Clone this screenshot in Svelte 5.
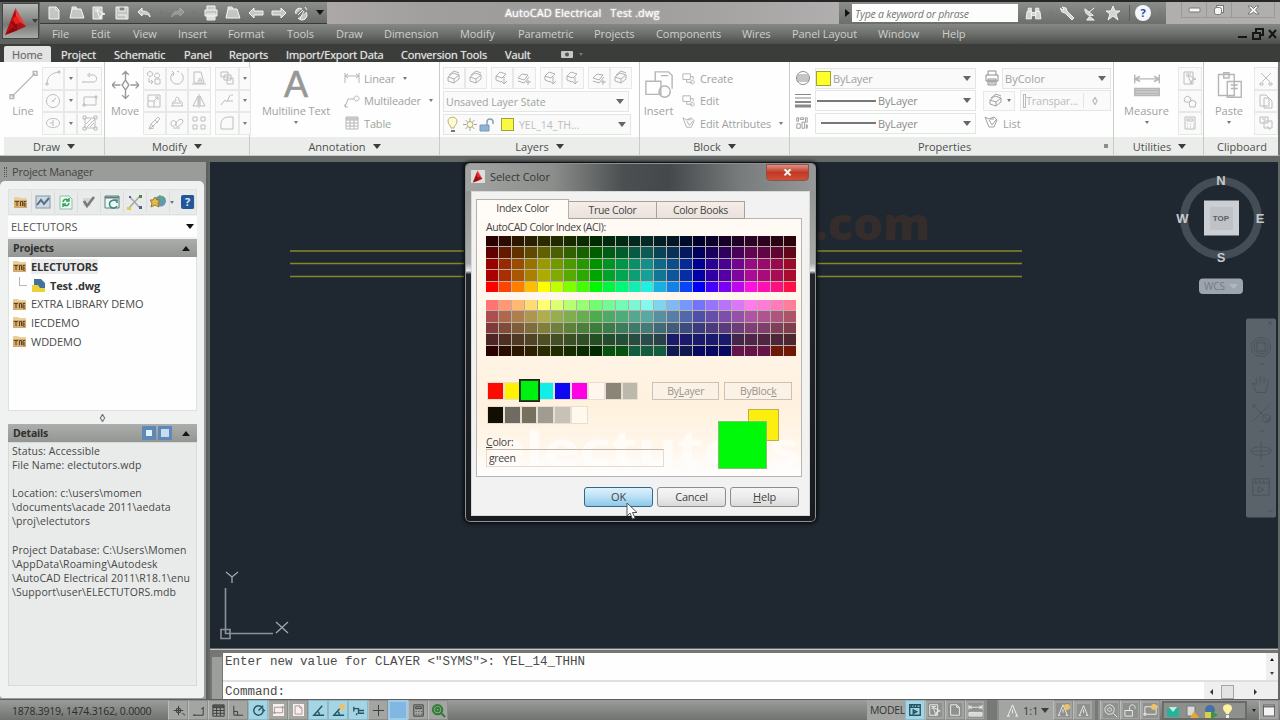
<script lang="ts">
  const ICONS: Record<string, string> = {
    line: 'M2 14L14 2M1 13h2v2H1zM13 1h2v2h-2z',
    arc: 'M2 14C2 7 6 3 14 2M1 13h2v2H1zM13 1h2v2h-2z',
    circle: 'M8 1.5a6.5 6.5 0 1 0 .01 0M8 8l3-3M7.5 7.5h1v1h-1z',
    ellipse: 'M8 3.5c4 0 6.5 2 6.5 4.500s-2.500 4.500-6.500 4.500S1.500 10.500 1.500 8 4 3.500 8 3.500M8 5v6M5 8h3',
    polyline: 'M1 12h11c4-1 3-7-1-7H7M1 11v2M8 3L5.500 5 8 7',
    rect: 'M2 4h12v8H2zM1 11h2v2H1zM13 3h2v2h-2z',
    hatch: 'M3 3h10v10H3zM1 1h3v3H1zM12 1h3v3h-3zM1 12h3v3H1zM12 12h3v3h-3zM5 12l7-7M4 9l5-5M8 12l4-4',
    move: 'M8 0v5M6 2l2-2 2 2M8 16v-5M6 14l2 2 2-2M0 8h5M2 6L0 8l2 2M16 8h-5M14 6l2 2-2 2M6 8l2-3 2 3-2 3z',
    copy: 'M4 1.500a2.500 2.500 0 1 0 .01 0M11 3a2.500 2.500 0 1 0 .01 0M9 9h5v5H9zM3 8v4h4M5 10l2 2-2 2',
    rotate: 'M4 3a6.300 6.300 0 1 0 8 0M3 1l2 2-1 3M8 1l2 1',
    stretch: 'M3 2h7l3 11H3zM7 11l2-3 2 3zM1 14h14',
    scale: 'M2 2h12v12H2zM2 8h6v6M8 8l4-4M9 4h3v3',
    trim: 'M2 13h12M4 13c-2-5 2-5 3-5-2-5 4-5 3 0 3 0 4 2 3 5M4 10h8',
    mirror: 'M7 3v10H2zM9 3v10h5zM8 1v14',
    erase: 'M3 14l2-5 7-7 2 2-7 7zM5 9l3 3M9 5l3 3M3 14l5-1',
    explode: 'M2 9c0-5 5-4 5-1s-5 5-5 1M7 10c0-6 7-7 7-4s-7 8-7 4M4 13h7',
    array: 'M2 2h4v4H2zM10 2h4v4h-4zM2 10h4v4H2zM10 10h4v4h-4z',
    layers: 'M2 2h7v5H2zM5 5h7v5H5zM8 8h6v6H8z',
    break: 'M2 12l4-5 2 2 3-7M9 8h5M12 2h2',
    fillet: 'M2 14V9c0-4 3-7 8-7h4v12H2',
    dim: 'M1 3v10M15 3v10M1 6h14M4 4L1 6l3 2M12 4l3 2-3 2',
    leader: 'M1 14l3-8h6M1 11v3h3M12.500 3a2.500 2.500 0 1 0 .01 0',
    table: 'M2 2h12v12H2zM2 5h12M2 8h12M2 11h12M6 5v9M10 5v9M2 3h12M2 4h12',
    stack: 'M2 7l5-4 6 2-5 4zM2 7v4l6 2 5-4V5M8 9v4M3 5l5-4 5 2',
    stackDown: 'M2 6l4-4 6 2-4 4zM2 6v4l5 2M10 7v7M7 11l3 3 3-3',
    stackStar: 'M2 8l4-4 6 1-4 5zM2 11l6 2 5-6M10 12h5M12 10v5',
    insert: 'M1 6h8v7H1zM6 6V1h7l2 2v7M11 8.500a3 3 0 1 0 .01 0M9 3h4',
    block: 'M2 3h8v6H2zM6 9v3h6M10 6h3v3M12 10a2 2 0 1 0 .01 0',
    attr: 'M2 2l4 2 5-2 3 3-3 7H6L2 2M6 5l3 5 4-5M7 4h4',
    globe: 'M8 1.500a6.500 6.500 0 1 0 .01 0M2 7h12M2 9h12M2 11h12M3 5h10',
    pattern: 'M2 2h2v4H2zM6 2h4v2H6zM12 2h2v5h-2zM2 9h4v5H2zM8 7h3v7H8zM13 10h1v4h-1z',
    printer: 'M4 5V1h8v4M2 5h12v6H2zM4 9h8v6H4zM5 11h6M5 13h6',
    measure: 'M1 2v5M15 2v5M1 4.500h14M4 3L1 4.500 4 6M12 3l3 1.500L12 6M1 10h14v4H1zM1 11h14M1 12h14M1 13h14',
    select: 'M2 2h9v12H2zM6 5l8 4-4 1-1 4zM4 4h5M4 6h2',
    cluster: 'M5 3l4 2-1 4H3L2 6zM10 7l4 2-1 5H8l-1-4z',
    calc: 'M3 2h10v12H3zM5 4h6v2H5zM5 9h1M8 9h1M11 9h1M5 12h1M8 12h1M11 12h1',
    paste: 'M2 2h9v12H2zM5 1h3v3H5zM7 6h8v9H7zM9 8h4M9 10h4',
    cut: 'M3 3l9 9M13 3l-9 9M2 13h3v2H2zM11 13h3v2h-3z',
    pages: 'M2 2h6l3 3v8H2zM6 5h5l3 3v7H6z',
    match: 'M2 2h8v6H2zM6 6h8v7H6zM9 11l3 4M4 4h4',
    new: 'M3 2h7l3 3v9H3zM10 2v3h3',
    open: 'M1 13L3 4h9l3 9zM3 4V2h4l1 2',
    save: 'M2 2h12v12H2zM5 2v4h6V2M4 10h8v4',
    undo: 'M2 7l4-4v3c5 0 8 2 8 6-2-3-4-3-8-3v2z',
    redo: 'M14 7l-4-4v3c-5 0-8 2-8 6 2-3 4-3 8-3v2z',
    left: 'M1 8l5-5v3h9v4H6v3z',
    right: 'M15 8l-5-5v3H1v4h9v3z',
    link: 'M3 9a4 4 0 0 1 6-5M13 7a5 5 0 0 1-8 6M5 10l5-5M7 14l4-8M12 2l2 3',
    find: 'M2 6h4v7H1zM10 6h4l1 7h-5zM3 3h3v3H3zM10 3h3v3h-3zM6 7h4v3H6z',
    wrench: 'M2 2l4 1 1 3 7 7-2 2-7-7-3-1-2-4 3 2 1-1z',
    dish: 'M2 3c0 6 4 8 9 7zM6 7l6-5M7 11l-3 4h8z',
    star: 'M8 1l2 5h5l-4 3 2 6-5-4-5 4 2-6-4-3h5z',
    angle: 'M14 13H3L12 3M7 9c2 1 2 2 2 4',
    plus: 'M8 2v12M2 8h12',
    corner: 'M3 3v10h10M3 9h4v4',
    elbow: 'M2 13h11V4M4 13v-1M13 6h-2',
    cross: 'M8 3v10M3 8h10M6 6h4v4H6zM12 11l3 2',
    otrack: 'M3 6h5v5h6M3 4v5M8 8h6M6 13v-2',
    target: 'M8 3a5 5 0 1 0 .01 0M8 8l5-5M12 8h3',
    annot: 'M8 2L3 14M8 2l5 12M2 14h3M11 14h3M8 7v4',
    lock: 'M2 8h8v6H2zM7 8V5c0-4 6-4 6 0v1',
    lens: 'M7 2a5 5 0 1 0 .01 0M11 11l4 4M7 5a2 2 0 1 0 .01 0',
    wheel: 'M8 1a7 7 0 1 0 .01 0M5 5h6v6H5zM8 3a5 5 0 1 0 .01 0',
    hand: 'M4 8V3M7 7V1M10 7V2M13 8V4M4 8l-3-1 3 7h7l2-6',
    zoom: 'M2 2l12 12M14 2L2 14M2 5V2h3M14 11v3h-3M12 9a3 3 0 1 0 .01 0',
    orbit: 'M8 1v14M1 8h14M8 5c10 0 10 6 0 6S-2 5 8 5',
    film: 'M2 2h12v12H2zM2 5h12M4 2v3M7 2v3M10 2v3M6 8l4 2-4 2z',
  };

  const QUICK = ['new', 'open', 'select', 'save', 'undo', '', 'redo', '', 'printer', 'open', 'left', 'right', 'link'];
  const MENUS = ['File', 'Edit', 'View', 'Insert', 'Format', 'Tools', 'Draw', 'Dimension', 'Modify', 'Parametric',
    'Projects', 'Components', 'Wires', 'Panel Layout', 'Window', 'Help'];
  const TABS = ['Home', 'Project', 'Schematic', 'Panel', 'Reports', 'Import/Export Data', 'Conversion Tools', 'Vault'];

  const DRAW = ['arc', '.', 'polyline', 'circle', '.', 'rect', 'ellipse', '.', 'hatch'];
  const MODIFY = ['copy', 'rotate', 'stretch', 'scale', 'trim', 'mirror', 'erase', 'explode', 'array'];
  const MODIFY_MORE = ['layers', '.', 'break', '.', 'fillet', '.'];
  const LAYER_TOOLS = ['stack', 'stack', 'stackDown', 'stackStar', 'stackDown', 'stackDown', 'stackStar', 'stack'];

  const PROJECTS = ['EXTRA LIBRARY DEMO', 'IECDEMO', 'WDDEMO'];

  // Color Index palette: one hue per column, dark to bright, then the pastel half mirrored
  const HUES = ['ff0000', 'ff4400', 'ff8000', 'ffbf00', 'ffff00', 'bfff00', '80ff00', '40ff00', '00f800', '00f540',
    '00f878', '12eeb0', '20f0e4', '18b0e0', '1480ea', '0844f8', '0000f8', '4400f8', '7c00f8', 'bc08ee', 'ff10e0',
    'ff10b4', 'ff1080', 'ff1048'];
  const DARK_ROWS = [0.17, 0.38, 0.6, 0.67, 1];
  const PASTEL_ROWS = [1, 0.68, 0.5, 0.31, 0.18];

  function shade(hex: string, value: number, pastel: boolean) {
    const rgb = [0, 2, 4].map((i) => parseInt(hex.slice(i, i + 2), 16));
    return 'rgb(' + rgb.map((c) => Math.round((pastel ? 115 + c * 0.55 : c) * value)).join(',') + ')';
  }

  function pastelCell(col: number, row: number) {
    if (row === 4) {
      if (col === 9 || col === 10) return '#08520f';
      if (col > 10 && col < 14) return '#145c40';
      if (col === 14 || col === 15) return '#101850';
      if (col > 15 && col < 19) return '#080860';
      if (col > 18 && col < 22) return '#641448';
      if (col > 21) return '#701808';
      return shade(HUES[col], 0.17, false);
    }
    if (row === 3 && col > 13 && col < 19) return '#19196e';
    return shade(HUES[col], PASTEL_ROWS[row], true);
  }

  const BASIC = ['#ff0a00', '#fff200', '#00f010', '#10eee8', '#1008f0', '#ff00e4', '#fff7ee', '#8b8578', '#bdb8ac'];
  const GRAYS = ['#120e02', '#6f6b60', '#77705f', '#a19c90', '#c8c1b4', '#fff8ed'];

  const DETAILS = `Status: Accessible
File Name: electutors.wdp

Location: c:\\users\\momen
\\documents\\acade 2011\\aedata
\\proj\\electutors

Project Database: C:\\Users\\Momen
\\AppData\\Roaming\\Autodesk
\\AutoCAD Electrical 2011\\R18.1\\enu
\\Support\\user\\ELECTUTORS.mdb`;

  const STATUS = [
    { icon: 'cross' }, { icon: 'elbow' }, { icon: 'table' }, { icon: 'corner' }, { icon: 'target', on: true },
    { icon: 'rect', paper: true }, { icon: 'new', paper: true }, { icon: 'angle', on: true }, { icon: 'angle', on: true, spark: true },
    { icon: 'otrack', on: true }, { icon: 'plus' }, { icon: '', blue: true }, { icon: 'calc' }, { icon: 'lens', green: true },
  ];
</script>

{#snippet icon(name: string, size = 16)}
  <svg class="ic" width={size} height={size} viewBox="0 0 16 16"><path d={ICONS[name]} /></svg>
{/snippet}

{#snippet tool(name: string)}
  <span class="tool">{#if name === '.'}<i class="caret tiny"></i>{:else}{@render icon(name)}{/if}</span>
{/snippet}

{#snippet folder()}
  <svg class="folder" width="15" height="14" viewBox="0 0 15 14">
    <path d="M1 2h5l1 1h7v10H1z" fill="#e9cf98" />
    <path d="M1 5h13v8H1z" fill="#d3ab6c" />
    <path d="M2 6.500h4M4 6.500V11M7.500 11V6.500h2V11M13 6.500h-2V11h2M11 9h2" fill="none" stroke="#5c4427" />
  </svg>
{/snippet}

{#snippet logo()}
  <svg class="logo" viewBox="0 0 24 30">
    <path d="M11 1L0 29l13-5z" fill="#b80d12" />
    <path d="M11 1l11 19-9 4z" fill="#ee3b38" />
    <path d="M6 16l7 8 9-4-7-5zM0 29l8-8 5 3z" fill="#7a0306" opacity=".65" />
    <path d="M8 12l4-3 4 7-5 2z" fill="#e8211f" />
  </svg>
{/snippet}

<div class="app">
  <header>
    <div class="appbtn">{@render logo()}<i class="caret"></i></div>
    <div class="title">
      <div class="quick">
        {#each QUICK as name}
          {#if name}<span class:dim={name === 'redo'}>{@render icon(name)}</span>{:else}<i class="caret tiny"></i>{/if}
        {/each}
        <i class="caret"></i>
      </div>
      <div class="caption">AutoCAD Electrical&nbsp;&nbsp; Test .dwg</div>
      <div class="search-zone">
        <i class="play"></i>
        <div class="search">Type a keyword or phrase</div>
        {@render icon('find', 17)}<i class="caret tiny"></i>
        {@render icon('wrench')}{@render icon('dish', 15)}{@render icon('star')}
        <b class="sep"></b><span class="help">?</span><i class="caret tiny"></i>
      </div>
      <div class="winbtns">
        <span><svg width="13" height="6"><rect x="1" y="1" width="11" height="4" rx="1" /></svg></span>
        <span><svg width="12" height="12"><rect x="3.500" y="1.500" width="7" height="7" /><rect x="1.500" y="3.500" width="7" height="7" rx="2" /></svg></span>
        <span class="wide"><svg width="13" height="12"><path d="M1 2h3l2.500 2.500L9 2h3L8.500 6l3.500 4H9L6.500 8 4 10H1l3.500-4z" /></svg></span>
      </div>
    </div>
    <nav class="menus">
      {#each MENUS as m}<span>{m}</span>{/each}
      <span class="mdi">
        <svg width="40" height="12" viewBox="0 0 40 12"><path d="M1 9h9" /><path d="M16 5h7v6h-7zM19 5V1h7v6h-3" stroke-width="1.400" /><path d="M32 2l7 8M39 2l-7 8" /></svg>
      </span>
    </nav>
  </header>

  <div class="tabs">
    {#each TABS as t, i}<span class:active={i === 0}>{t}</span>{/each}
    <span class="cam"><svg width="12" height="7"><rect width="12" height="7" rx="1" fill="#c6c8c5" /><circle cx="6" cy="3.500" r="2" fill="#555" /></svg><i class="caret tiny"></i></span>
  </div>

  <div class="ribbon">
    <section class="p-draw">
      <div class="content">
        <div class="big">{@render icon('line', 31)}<span>Line</span></div>
        <div class="tools g-draw">{#each DRAW as n}{@render tool(n)}{/each}</div>
      </div>
      <footer>Draw<i class="caret"></i></footer>
    </section>
    <section class="p-modify">
      <div class="content">
        <div class="big dark">{@render icon('move', 27)}<span>Move</span></div>
        <div class="tools g-mod">{#each MODIFY as n}{@render tool(n)}{/each}</div>
        <div class="tools g-more">{#each MODIFY_MORE as n}{@render tool(n)}{/each}</div>
      </div>
      <footer>Modify<i class="caret"></i></footer>
    </section>
    <section class="p-annot">
      <div class="content">
        <div class="big mtext"><b>A</b><span>Multiline Text</span><i class="caret tiny"></i></div>
        <div class="rows">
          <div>{@render icon('dim')}<span>Linear</span><i class="caret tiny"></i></div>
          <div>{@render icon('leader')}<span>Multileader</span><i class="caret tiny"></i></div>
          <div>{@render icon('table')}<span>Table</span></div>
        </div>
      </div>
      <footer>Annotation<i class="caret"></i></footer>
    </section>
    <section class="p-layers">
      <div class="content col">
        <div class="layer-tools">{#each LAYER_TOOLS as n}{@render tool(n)}{/each}</div>
        <div class="combo"><span>Unsaved Layer State</span><i class="caret"></i></div>
        <div class="combo low">
          <svg width="54" height="18" viewBox="0 0 54 18">
            <path d="M4 12c0-3-3-3-3-7 0-5 9-5 9 0 0 4-3 4-3 7z" fill="#fffcd0" stroke="#b8b27a" /><path d="M4 15h4" stroke="#777" stroke-width="2" />
            <circle cx="23" cy="8.500" r="3" fill="#fffbd0" stroke="#aaa78a" /><path d="M23 2v3M23 12v3M16 8.500h3M27 8.500h3M18.500 4l2 2M27.500 4l-2 2M18.500 13l2-2M27.500 13l-2-2" stroke="#aaa78a" />
            <path d="M33 9h9v6h-9z" fill="#8db4d8" stroke="#7898b8" /><path d="M40 9V6c0-4 6-4 6 0v2" fill="none" stroke="#8ba0b4" stroke-width="1.500" />
          </svg>
          <i class="swatch"></i><span class="faint">YEL_14_TH...</span><i class="caret"></i>
        </div>
      </div>
      <footer>Layers<i class="caret"></i></footer>
    </section>
    <section class="p-block">
      <div class="content">
        <div class="big">{@render icon('insert', 30)}<span>Insert</span></div>
        <div class="rows">
          <div>{@render icon('block', 15)}<span>Create</span></div>
          <div>{@render icon('block', 15)}<span>Edit</span></div>
          <div>{@render icon('attr', 15)}<span>Edit Attributes</span><i class="caret tiny"></i></div>
        </div>
      </div>
      <footer>Block<i class="caret"></i></footer>
    </section>
    <section class="p-props">
      <div class="content">
        <div class="props-main">
          <span class="dk">{@render icon('globe')}</span><div class="combo"><i class="swatch"></i><span>ByLayer</span><i class="caret"></i></div>
          <svg class="weights" width="16" height="15"><path d="M0 1.500h16M0 5h16" /><path d="M0 9h16" stroke-width="2" /><path d="M0 13h16" stroke-width="3" /></svg>
          <div class="combo mid"><hr /><span>ByLayer</span><i class="caret"></i></div>
          {@render icon('pattern', 14)}<div class="combo mid"><hr class="short" /><span>ByLayer</span><i class="caret"></i></div>
        </div>
        <div class="props-side">
          <div><span class="dk">{@render icon('printer')}</span><div class="combo"><span>ByColor</span><i class="caret"></i></div></div>
          <div class="transp"><span class="tool">{@render icon('stack')}<i class="caret tiny"></i></span><div class="combo"><i class="grip"></i><span class="faint">Transpar...</span><em>◊</em></div></div>
          <div>{@render icon('attr')}<span class="lst">List</span></div>
        </div>
      </div>
      <footer>Properties<i class="corner-mark"></i></footer>
    </section>
    <section class="p-util">
      <div class="content">
        <div class="big">{@render icon('measure', 28)}<span>Measure</span><i class="caret tiny"></i></div>
        <div class="tools one">{@render tool('select')}{@render tool('cluster')}{@render tool('calc')}</div>
      </div>
      <footer>Utilities<i class="caret"></i></footer>
    </section>
    <section class="p-clip">
      <div class="content">
        <div class="big">{@render icon('paste', 28)}<span>Paste</span><i class="caret tiny"></i></div>
        <div class="tools one">{@render tool('cut')}{@render tool('pages')}{@render tool('match')}</div>
      </div>
      <footer>Clipboard</footer>
    </section>
  </div>

  <main>
    <aside>
      <div class="pm-title"><i></i>Project Manager</div>
      <div class="pm-body">
        <div class="pm-tools">
          <span>{@render folder()}</span>
          <span><svg width="16" height="14"><rect x="1" y="1" width="14" height="12" fill="#cfd9e2" stroke="#8698a8" /><path d="M2 10l4-5 3 4 5-6" fill="none" stroke="#566f86" stroke-width="2" /></svg></span>
          <span><svg width="14" height="15"><path d="M1 1h9l3 3v10H1z" fill="#eefaf2" stroke="#91bfa3" /><path d="M4 7c1-4 5-3 6-1M10 8c-1 4-5 3-6 1M10 3v3H7M4 12V9h3" fill="none" stroke="#35a565" stroke-width="1.500" /></svg></span>
          <span><svg width="14" height="14"><path d="M1 3h8v8H1z" fill="#d5d7d5" /><path d="M2 6l3 5 7-9" fill="none" stroke="#777b78" stroke-width="2.500" /></svg></span>
          <span><svg width="16" height="15"><path d="M1 1h14v12H1z" fill="#eff6f6" stroke="#607d80" /><path d="M1 2.500h14" stroke="#607d80" stroke-width="2" /><path d="M12 6a4 4 0 1 0 1 5M9 5h4v3" fill="none" stroke="#2f8b76" stroke-width="1.500" /></svg></span>
          <span><svg width="16" height="16"><path d="M2 14L13 2M3 3l10 11" stroke="#a5a9a6" stroke-width="1.500" /><path d="M12 1h3v3h-3z" fill="#3c9045" /><path d="M0 13h4v3H0z" fill="#d6d04a" /><path d="M12 12h3v3h-3zM2 2h2v2H2z" fill="#55618a" /></svg></span>
          <span><svg width="17" height="16"><circle cx="10.500" cy="7" r="5.500" fill="#6297b8" /><path d="M9 2c4 1 1 4 5 5" fill="none" stroke="#5ab168" stroke-width="2" /><path d="M5 3l2 3h3l-2 3 1 4-4-2-4 2 1-4-2-3h3z" fill="#e2bc43" stroke="#98792a" /></svg></span>
          <i class="caret tiny"></i>
          <span class="blue-help">?</span>
        </div>
        <div class="pm-combo">ELECTUTORS<i class="caret"></i></div>
        <div class="pm-head">Projects<i class="caret up"></i></div>
        <div class="tree">
          <div>{@render folder()}<b class="hl">ELECTUTORS</b></div>
          <div class="child"><i class="elbow"></i><svg width="15" height="15"><path d="M3 1h7l4 4v9H3z" fill="#43719a" /><path d="M1 7h6l2 3h5v4H1z" fill="#ecd136" /></svg><b>Test .dwg</b></div>
          {#each PROJECTS as p}<div>{@render folder()}<span>{p}</span></div>{/each}
        </div>
        <div class="split">◊</div>
        <div class="pm-head"><span>Details</span><i class="dbtn"></i><i class="dbtn search-btn"></i><i class="caret up"></i></div>
        <pre class="details">{DETAILS}</pre>
      </div>
    </aside>

    <div class="work">
      <div class="canvas">
        <svg class="drawing" width="1068" height="486" viewBox="210 162 1068 486">
          <text class="mark" x="814" y="240" textLength="116" lengthAdjust="spacingAndGlyphs">.com</text>
          <path d="M290 251H1022M290 263.500H1022M290 276.500H1022" stroke="#858826" stroke-width="1.600" />
          <path d="M225.500 588V633.500H273M221 629.500h9v9h-9z" stroke="#8b9199" stroke-width="1.600" fill="none" />
          <path d="M226 572l6 5 6-5M232 577v6M276 622l12 11M288 622l-12 11" stroke="#a2a7ad" stroke-width="1.300" fill="none" />
          <circle cx="1221" cy="218" r="37" stroke="#444d56" stroke-width="8" fill="none" />
          <rect x="1204" y="200.500" width="35" height="35" fill="#cbced2" />
          <rect x="1210" y="207" width="23" height="23" fill="#bfc2c6" />
          <g class="compass">
            <text x="1221" y="185">N</text><text x="1221" y="262">S</text><text x="1182.500" y="223">W</text><text x="1260" y="223">E</text>
            <text class="top" x="1221" y="221">TOP</text>
          </g>
          <rect x="1199" y="278.500" width="44" height="15.500" rx="4" fill="#9da4ae" />
          <text class="wcs" x="1204" y="290">WCS</text><path d="M1229 284h9l-4.500 5z" fill="#b2b7bf" />
          <rect x="1246" y="318.500" width="30" height="199" rx="2" fill="#5b636a" />
          <g class="nav">
            <svg x="1250" y="336" width="22" height="22" viewBox="0 0 16 16"><path d={ICONS.wheel} /></svg>
            <svg x="1251" y="374" width="21" height="21" viewBox="0 0 16 16"><path d={ICONS.hand} /></svg>
            <svg x="1250" y="402" width="22" height="22" viewBox="0 0 16 16"><path d={ICONS.zoom} /></svg>
            <svg x="1250" y="440" width="22" height="22" viewBox="0 0 16 16"><path d={ICONS.orbit} /></svg>
            <svg x="1250" y="476" width="22" height="22" viewBox="0 0 16 16"><path d={ICONS.film} /></svg>
            <path d="M1260 364h4M1260 431h4M1260 466h4M1268 321l4 4M1272 321l-4 4M1268 511h5" />
          </g>
        </svg>
      </div>
      <div class="command">
        <i class="handle"></i>
        <div class="cmd-rows">
          <div class="history"><span>Enter new value for CLAYER &lt;"SYMS"&gt;: YEL_14_THHN</span><div class="vscroll"><i class="caret up"></i><i class="caret"></i></div></div>
          <div class="prompt"><span>Command:</span><div class="hscroll"><i class="lt"></i><b></b><i class="gt"></i></div></div>
        </div>
      </div>
    </div>
  </main>

  <div class="status">
    <span class="coords">1878.3919, 1474.3162, 0.0000</span>
    {#each STATUS as s}
      <span class="sb" class:on={s.on} class:blue={s.blue} class:paper={s.paper} class:green={s.green}>
        {#if s.icon}{@render icon(s.icon, 15)}{/if}{#if s.spark}<i class="spark"></i>{/if}
      </span>
    {/each}
    <span class="model">MODEL</span>
    <span class="sb on">{@render icon('film', 14)}</span>
    <span class="sb lite">{@render icon('select', 14)}</span>
    <span class="sb lite">{@render icon('new', 14)}</span>
    <span class="sb lite">{@render icon('measure', 15)}</span>
    <i class="trench"></i>
    <span class="scale">{@render icon('annot', 15)}1:1<i class="caret"></i></span>
    <span class="sb lite">{@render icon('annot', 14)}<i class="spark"></i></span>
    <span class="sb lite">{@render icon('annot', 13)}</span>
    <i class="trench thin"></i>
    <span class="sb lite">{@render icon('lens', 15)}</span>
    <span class="sb lite">{@render icon('lock', 15)}</span>
    <span class="sb lite">{@render icon('rect', 15)}<i class="spark"></i></span>
    <span class="tray">
      <svg width="78" height="16">
        <path d="M1 3l6 4 6-4v10H1z" fill="#27b39b" /><path d="M3 3l4 5 4-5" fill="#b7f4df" />
        <path d="M21 2h8v10h-8z" fill="#d9dad8" stroke="#75777a" /><path d="M28 7l5 7h-9z" fill="#e8a637" />
        <circle cx="44" cy="6" r="5" fill="#466fa6" /><path d="M39 8h7v6h-7z" fill="#d8cf46" /><path d="M45 7l7 4-7 4z" fill="#3a9548" />
        <path d="M60 10c0-2-3-3-3-6 0-5 9-5 9 0 0 3-3 4-3 6z" fill="#fff2a0" /><path d="M61.500 11v3" stroke="#eee" stroke-width="3" />
      </svg>
    </span>
    <i class="caret tiny"></i>
    <span class="sb end"><svg width="12" height="13"><rect x=".5" y="1" width="11" height="11" fill="#f2f3f2" stroke="#666" /><path d="M1 2.500h10" stroke="#777" stroke-width="2" /></svg></span>
  </div>

  <div class="dialog">
    <div class="d-title">{@render logo()}<span>Select Color</span><b class="close">×</b></div>
    <div class="d-body">
      <div class="d-tabs"><span class="active">Index Color</span><span>True Color</span><span>Color Books</span></div>
      <div class="page">
        <div class="aci">AutoCAD Color Index (ACI):</div>
        <div class="palette">
          {#each DARK_ROWS as v}{#each HUES as h}<i style:background={shade(h, v, false)}></i>{/each}{/each}
        </div>
        <div class="palette">
          {#each PASTEL_ROWS as _, r}{#each HUES as _, c}<i style:background={pastelCell(c, r)}></i>{/each}{/each}
        </div>
        <div class="picks">
          <div class="basic">
            {#each BASIC as c, i}<i class:picked={i === 2} style:background={c}></i>{/each}
          </div>
          <span class="dis">By<u>L</u>ayer</span><span class="dis">ByBloc<u>k</u></span>
        </div>
        <div class="basic grays">{#each GRAYS as c}<i style:background={c}></i>{/each}</div>
        <div class="entry">
          <div class="field"><span><u>C</u>olor:</span><div class="input">green</div></div>
          <div class="preview"><i class="old"></i><i class="now"></i></div>
          <svg class="wm" width="316" height="60"><text x="3" y="46" textLength="310" lengthAdjust="spacingAndGlyphs">electutors</text></svg>
        </div>
      </div>
      <div class="d-btns"><span class="ok">OK</span><span>Cancel</span><span><u>H</u>elp</span></div>
    </div>
  </div>
  <svg class="cursor" width="12" height="18" viewBox="0 0 12 18"><path d="M1 1v13l3-3 2.500 6 2.500-1-2.500-5.500H11z" /></svg>
</div>

<style>
  :global(body) { margin: 0; background: #3b3d3b; }

  .app {
    position: relative;
    width: 1280px;
    height: 720px;
    overflow: hidden;
    display: flex;
    flex-direction: column;
    background: #646866;
    font: 11px 'Open Sans', 'Noto Sans', sans-serif;
    color: #444;
  }
  .app * { box-sizing: border-box; }
  svg { display: block; flex: none; }
  u { text-underline-offset: 1px; }

  .ic path { fill: none; stroke: currentColor; stroke-width: 1; vector-effect: non-scaling-stroke; }
  .caret {
    display: inline-block;
    flex: none;
    border: 4px solid transparent;
    border-top: 5px solid #3c3c3c;
    border-bottom: 0;
  }
  .caret.tiny { border-width: 3px 2.500px 0; border-top-color: #777; }
  .caret.up { border: 4px solid transparent; border-bottom: 5px solid #161616; border-top: 0; }

  /* title + menu */
  header {
    height: 44px;
    flex: none;
    display: grid;
    grid-template: 22px 20px / 40px 1fr;
    border-top: 2px solid #252725;
    background: #5f625f;
  }
  .appbtn {
    grid-row: 1 / 3;
    margin: 1px 1px 5px 2px;
    padding-left: 2px;
    display: flex;
    align-items: center;
    gap: 4px;
    background: linear-gradient(#b8bab8, #777977 60%, #a9aba9);
    border: 1px solid #444;
  }
  .appbtn .logo { width: 23px; height: 31px; }
  .appbtn .caret { border-width: 4px 3px 0; }
  .title { display: flex; height: 22px; }
  .quick {
    width: 287px;
    padding: 0 3px 0 6px;
    display: flex;
    align-items: center;
    justify-content: space-between;
    background: linear-gradient(#8d8f8d, #686b68);
    border-bottom: 1px solid #3a3a3a;
    color: #f2f3f2;
  }
  .quick .ic path { fill: #e4e6e4; stroke: #f4f5f4; fill-opacity: .7; }
  .quick .dim { opacity: .35; }
  .quick .caret:last-child { border-top-color: #151515; }
  .caption {
    width: 512px;
    background: linear-gradient(90deg, #aba8a7, #a19f9e 20%, #9d9b9a 50%, #a5a3a2 75%, #b0aeae);
    color: #fff;
    font-size: 11px;
    line-height: 22px;
    letter-spacing: .1px;
    padding-left: 178px;
    text-shadow: 0 0 2px #fff;
  }
  .search-zone {
    width: 327px;
    display: flex;
    align-items: center;
    gap: 7px;
    background: linear-gradient(#8b8d8b, #6b6e6b);
    color: #f0f1f0;
  }
  .search-zone > .ic path { fill: #e8e9e8; fill-opacity: .8; }
  .play { border: 4px solid transparent; border-left: 5px solid #111; border-right: 0; margin-left: 6px; }
  .search {
    width: 166px;
    height: 18px;
    margin-left: -5px;
    background: #fdfdfd;
    color: #777;
    font-size: 10.500px;
    letter-spacing: -.22px;
    line-height: 20px;
    font-style: italic;
    padding-left: 3px;
    white-space: nowrap;
  }
  .sep { width: 1px; height: 16px; background: #5b5d5b; margin-left: 1px; }
  .help {
    width: 16px; height: 16px;
    border-radius: 50%;
    background: #f4f7fb;
    color: #2b479d;
    font-weight: 700;
    line-height: 16px;
    text-align: center;
    margin-left: -2px;
  }
  .winbtns { flex: 1; display: flex; padding: 0 2px 6px 15px; background: #b0afae; }
  .winbtns span {
    width: 26px;
    display: grid;
    place-items: center;
    border: 1px solid #999;
    border-top: 0;
    margin-right: -1px;
  }
  .winbtns .wide { width: 44px; }
  .winbtns svg { fill: #f5f5f5; stroke: #777; stroke-width: 1; }

  .menus {
    display: grid;
    grid-template-columns: 39px 42px 45px 50px 59px 49px 48px 76px 58px 76px 62px 86px 50px 86px 64px 1fr auto;
    padding-left: 12px;
    line-height: 19px;
    color: #cdcfcc;
    letter-spacing: -.08px;
    background: linear-gradient(#858885, #6c6f6c 50%, #4b4d4b);
    white-space: nowrap;
  }
  .mdi { padding: 4px 3px 0 0; }
  .mdi path { stroke: #161616; stroke-width: 2; fill: none; }

  .tabs {
    height: 18px;
    flex: none;
    display: grid;
    grid-template-columns: 49px 53px 70px 45px 57px 115px 104px 56px auto;
    padding: 2px 0 0 4px;
    background: #3b3d3b;
    color: #e3e4e3;
    line-height: 17px;
    white-space: nowrap;
    letter-spacing: -.12px;
    text-shadow: 0 0 1px #bbb;
  }
  .tabs span { padding-left: 8px; }
  .tabs .active { width: 47px; background: #e2e3e2; color: #666; border-radius: 2px 2px 0 0; }
  .tabs .cam { display: flex; align-items: center; gap: 6px; padding-left: 8px; }

  /* ribbon */
  .ribbon {
    height: 94px;
    flex: none;
    display: grid;
    grid-template-columns: 101px 145px 190px 200px 150px 324px 90px 74px;
    padding-left: 4px;
    background: #fdfefd;
    border-right: 2px solid #777;
    border-bottom: 1px solid #c4c6c4;
    color: #a0a2a0;
  }
  section { display: flex; flex-direction: column; border-right: 1px solid #c9cbc9; min-width: 0; }
  .content { height: 75px; display: flex; padding: 5px 2px 2px 3px; white-space: nowrap; }
  .content.col { flex-direction: column; }
  footer {
    flex: 1;
    display: flex;
    align-items: center;
    justify-content: center;
    gap: 7px;
    background: #ebedeb;
    color: #4e504e;
  }
  .big { display: flex; flex-direction: column; align-items: center; flex: none; }
  .big .ic { height: 36px; color: #b5b7b5; }
  .big .ic path { stroke-width: 1.400; }
  .big.dark .ic { color: #999; }
  .big span { line-height: 16px; }
  .big .caret { margin-top: 2px; }
  .mtext b { font: 36px/36px 'Liberation Sans', sans-serif; color: #969896; -webkit-text-stroke: .6px #969896; height: 36px; }
  .p-draw .big { width: 32px; }
  .p-modify .big { width: 34px; }
  .p-annot .big { width: 86px; letter-spacing: -.1px; }
  .tools { display: grid; grid-auto-rows: 22.500px; align-content: start; color: #bcbebc; }
  .tool { display: flex; align-items: center; justify-content: center; border: 1px solid #e7e9e7; background: #f9faf9; }
  .g-draw { grid-template-columns: 22px 13px 25px; margin-left: 3px; }
  .g-mod { grid-template-columns: repeat(3, 22.500px); margin-left: 1px; }
  .g-more { grid-template-columns: 24px 12px; margin-left: 4px; }
  .tools.one { grid-template-columns: 24px; }
  .rows { display: grid; grid-template-rows: repeat(3, 22.500px); align-items: center; letter-spacing: -.15px; }
  .rows > div { display: flex; align-items: center; gap: 4px; }
  .rows .ic { color: #b5b7b5; }
  .p-annot .rows { margin-left: 5px; }
  .p-annot .rows .caret, .p-block .rows .caret { margin-left: 4px; }
  .p-block .rows { margin-left: 7px; }
  .layer-tools { display: flex; height: 22px; padding-right: 1px; color: #b0b2b0; }
  .layer-tools .tool { flex: 1; }
  .layer-tools .tool:nth-child(2n) { margin-right: 4px; }
  .combo {
    display: flex;
    align-items: center;
    height: 21px;
    padding: 0 4px 0 2px;
    border: 1px solid #e4e6e4;
    background: #f9faf9;
    min-width: 0;
  }
  .combo span { flex: 1; }
  .combo > .caret { border-width: 5px 4px 0; border-top-color: #666; }
  .p-layers .combo { width: 186px; margin-top: 2px; font-size: 10.500px; }
  .p-layers .low { width: 188px; padding-left: 3px; }
  .faint { color: #bbbdbb; }
  .swatch { width: 13px; height: 13px; border: 1px solid #a2a23c; background: #ffff2a; margin-right: 5px; flex: none; }
  .low .swatch { background: #fbf842; }
  .p-block .big { width: 31px; }
  .props-main { width: 186px; display: grid; grid-template: repeat(3, 22.500px) / 22px 1fr; align-items: center; letter-spacing: -.15px; }
  .props-main > .ic, .props-main .weights { margin-left: 2px; }
  .dk { color: #8c8e8c; padding-left: 2px; }
  .props-main .combo .swatch { margin-left: -2px; margin-right: 2px; width: 15px; height: 15px; }
  .weights { fill: none; stroke: #888; }
  .combo.mid { background: #fdfdfd; }
  .combo.mid span { color: #8a8c8a; }
  .combo hr { width: 59px; margin: 0 2px 0 -1px; border: 0; border-top: 2px solid #777; }
  .combo hr.short { width: 55px; margin-left: 3px; }
  .props-side { margin-left: 7px; width: 130px; display: grid; grid-template-rows: repeat(3, 22.500px); }
  .props-side > div { display: flex; align-items: center; gap: 2px; }
  .props-side .dk { padding-left: 1px; }
  .props-side .combo { flex: 1; }
  .transp .tool { width: 32px; height: 20px; gap: 3px; }
  .transp .combo { margin-left: 3px; font-size: 11px; letter-spacing: -.25px; }
  .transp em { font-style: normal; border-left: 1px solid #e4e6e4; padding: 0 8px; }
  .grip { width: 3px; height: 14px; border: 1px solid #bbb; }
  .lst { padding-left: 2px; }
  .p-props footer { position: relative; padding-right: 14px; }
  .corner-mark { position: absolute; right: 5px; width: 4px; height: 4px; background: #8c8e8c; }
  .p-util .content { padding-left: 10px; gap: 9px; }
  .p-util footer, .p-clip footer { padding-left: 2px; }
  .p-util .big { width: 45px; }
  .p-clip .content { padding-left: 9px; gap: 9px; }
  .p-clip .big { width: 32px; }
  .p-clip { border: 0; }

  /* work area */
  main { flex: 1; display: flex; margin-top: 6px; min-height: 0; }
  aside { width: 208px; display: flex; flex-direction: column; background: #9a9c9a; border-right: 2px solid #5d605e; }
  .pm-title { height: 19px; display: flex; align-items: center; gap: 5px; padding-left: 4px; color: #444; letter-spacing: -.2px; }
  .pm-title i { width: 3px; height: 10px; border: 1px dotted #555; }
  .pm-body {
    flex: 1;
    margin-right: 2px;
    margin-bottom: 1px;
    border-radius: 5px 5px 3px 3px;
    background: #f0f2f1;
    padding: 8px 7px 0 8px;
  }
  .pm-tools {
    height: 26px;
    display: flex;
    align-items: center;
    border: 1px solid #dfe1e0;
    background: #e9ebea;
  }
  .pm-tools > span { flex: 1; height: 22px; display: grid; place-items: center; border-right: 1px solid #dcdedd; }
  .pm-tools .blue-help {
    flex: none;
    width: 14px; height: 14px;
    margin: 0 1px 0 7px;
    background: #245798;
    color: #dcecff;
    font-weight: 700;
    line-height: 14px;
    border-radius: 2px;
  }
  .pm-combo {
    height: 21px;
    margin-top: 1px;
    display: flex;
    align-items: center;
    justify-content: space-between;
    padding: 0 3px 0 3px;
    background: #fefefe;
    color: #555;
  }
  .pm-combo .caret { border-top-color: #111; }
  .pm-head {
    height: 18px;
    margin-top: 2px;
    display: flex;
    align-items: center;
    gap: 2px;
    padding: 0 7px 0 5px;
    background: linear-gradient(#acaeac, #949694);
    color: #2f302f;
    font-weight: 700;
    font-size: 10.500px;
    letter-spacing: -.2px;
  }
  .pm-head .up { margin-left: auto; }
  .pm-head span { flex: 1; }
  .pm-head span ~ .up { margin-left: 8px; }
  .dbtn { width: 14px; height: 14px; background: #dff0ff; border: 4px solid #5d88b8; }
  .search-btn { border-width: 3px; background: #c6dcf0; }
  .tree { height: 154px; background: #fefefe; border: 1px solid #dfe1df; border-top: 0; padding: 0 3px; }
  .tree > div { height: 18.700px; display: flex; align-items: center; gap: 4px; white-space: nowrap; letter-spacing: -.03px; color: #4a4a4a; }
  .tree b { font-size: 11px; letter-spacing: -.2px; color: #333; }
  .tree .hl { background: #ececec; }
  .tree .child { padding-left: 7px; }
  .elbow { width: 8px; height: 9px; border: 1px solid #b5b5b5; border-width: 0 0 1px 1px; margin: -8px 0 0; }
  .split { height: 12px; text-align: center; font-size: 11px; line-height: 14px; }
  .split + .pm-head { margin-top: 1px; }
  .details {
    margin: 0;
    height: 244px;
    border: 1px solid #d8dad9;
    background: #e9ebea;
    padding: 1px 0 0 3px;
    font: 10.500px/14.100px 'Open Sans', sans-serif;
    letter-spacing: .1px;
    color: #484848;
  }

  .work { flex: 1; display: flex; flex-direction: column; padding-right: 2px; margin-left: 2px; }
  .canvas { height: 486px; background: #1f2730; }
  .mark { font: 800 45px 'Open Sans', sans-serif; fill: #352d2b; }
  .compass { font: 700 13px 'Liberation Sans', sans-serif; fill: #c6c9cc; text-anchor: middle; }
  .compass .top { font-size: 8px; fill: #5c5f64; }
  .wcs { font-size: 10px; fill: #737b86; }
  .nav path { fill: none; stroke: #4b535b; vector-effect: non-scaling-stroke; }

  .command { flex: 1; display: flex; border-top: 1px solid #c6c8c6; margin-top: 1px; background: #737673; padding: 3px 0 1px 2px; }
  .handle { width: 10px; margin-right: 1px; border-top: 4px solid #777; background: #9c9e9c; }
  .cmd-rows { flex: 1; display: flex; flex-direction: column; background: #fdfefd; font: 12.500px 'Liberation Mono', monospace; color: #4a4a4a; }
  .history { height: 29px; display: flex; justify-content: space-between; border-bottom: 2px solid #dedfde; line-height: 19px; padding-left: 2px; }
  .vscroll { width: 12px; display: flex; flex-direction: column; align-items: center; justify-content: space-around; background: #efefef; }
  .vscroll .caret { border-left-width: 2px; border-right-width: 2px; border-top-width: 3px; border-bottom-width: 3px; border-top-color: transparent; }
  .vscroll .caret:last-child { border-top-color: #444; border-bottom-width: 0; }
  .prompt { flex: 1; display: flex; justify-content: space-between; line-height: 20px; padding-left: 2px; overflow: hidden; }
  .hscroll { width: 74px; display: flex; align-items: center; padding: 0 21px 0 6px; background: #efefef; }
  .hscroll b { width: 13px; height: 14px; margin: 0 auto 0 8px; border: 1px solid #a5a7a5; background: #e2e3e2; }
  .lt, .gt { border: 3px solid transparent; border-right: 3px solid #333; border-left: 0; }
  .gt { border-right: 0; border-left: 3px solid #333; }

  /* status bar */
  .status {
    height: 21px;
    flex: none;
    display: flex;
    align-items: stretch;
    background: linear-gradient(#9b9d9b, #707370);
    border-top: 1px solid #5d5f5d;
    color: #3a3a3a;
  }
  .coords { width: 168px; padding-left: 12px; line-height: 22px; font-size: 10.500px; letter-spacing: -.21px; white-space: nowrap; color: #2c2c2c; }
  .sb {
    position: relative;
    width: 20px;
    flex: none;
    display: grid;
    place-items: center;
    border: 1px solid #8c8e8c;
    border-left-color: #bbb;
    background: #a3a5a3;
    color: #3e403e;
  }
  .sb.on { background: #a3d5e5; border-color: #8fb8c4; color: #255663; }
  .sb.on path { stroke-width: 1.400; }
  .sb.blue { background: #82b7e4; border: 2px solid #9fcbe8; }
  .sb.paper .ic { background: #f4f0ef; color: #b79595; width: 11px; height: 12px; }
  .sb.green { color: #2f7d35; }
  .sb.green path { stroke-width: 2; }
  .sb.lite { color: #e6e7e6; }
  .sb.lite .ic { background: #8f918f; }
  .spark { position: absolute; right: 2px; top: 3px; width: 6px; height: 6px; border-radius: 50%; background: #efc16a; }
  .model { width: 38px; margin-left: auto; background: #a3a5a3; line-height: 20px; padding-left: 3px; font-size: 10.500px; letter-spacing: -.35px; color: #333; }
  .trench { width: 14px; background: #777977; border: solid #8d8f8d; border-width: 0 2px; flex: none; }
  .trench.thin { width: 7px; }
  .scale { width: 54px; display: flex; align-items: center; gap: 3px; padding-left: 6px; background: #a3a5a3; }
  .scale .ic { color: #eee; }
  .tray { width: 85px; margin: 1px 0 0 2px; padding: 1px 2px; border: 2px solid #6a6c6a; background: #8e908e; }
  .status > .caret { align-self: center; margin: 0 3px 0 5px; border-top-color: #222; }
  .sb.end { margin-right: 1px; }

  /* dialog */
  .dialog {
    position: absolute;
    left: 464px;
    top: 162px;
    width: 353px;
    height: 361px;
    padding: 1px 6px 6px;
    display: flex;
    flex-direction: column;
    border: 1px solid #101418;
    border-radius: 6px;
    background: linear-gradient(#8b8d8b, #a9aba9 28%, #ececec 30%, #22262a 31%, #181c20);
    box-shadow: inset 0 0 0 1px #8d8f90, 0 0 4px #000;
    font-size: 10.500px;
    letter-spacing: -.25px;
    color: #444;
  }
  .d-title {
    height: 27px;
    flex: none;
    margin: 0 -5px;
    padding: 0 6px 3px 5px;
    display: flex;
    align-items: center;
    gap: 5px;
    border-radius: 5px 5px 0 0;
    background: linear-gradient(90deg, #a2a4a2, #8b8d8b 25%, #4c4f51 45%, #44484a 58%, #777a7b 78%, #979998);
    font-size: 11px;
    color: #353535;
    letter-spacing: -.07px;
  }
  .d-title .logo { width: 14px; height: 13px; background: #ddd; }
  .close {
    width: 43px;
    height: 17px;
    margin: -7px 0 0 auto;
    border: 1px solid #8f5048;
    border-radius: 0 0 4px 4px;
    background: linear-gradient(#db9384, #c23826 50%, #ce5038);
    color: #fff;
    font: 700 16px/14px 'Open Sans', sans-serif;
    text-align: center;
  }
  .d-body { flex: 1; display: flex; flex-direction: column; padding: 7px 7px 0 4px; background: #f1f2f1; border: 1px solid #d8dad8; }
  .d-tabs { display: flex; align-items: flex-end; height: 20px; margin-bottom: -1px; }
  .d-tabs span {
    width: 88px;
    height: 18px;
    border: 1px solid #a8a29c;
    border-left: 0;
    background: linear-gradient(#f7ede8, #e9e1dc);
    text-align: center;
    line-height: 17px;
    letter-spacing: -.35px;
    z-index: 1;
  }
  .d-tabs .active { width: 93px; height: 20px; border: 1px solid #b5afaa; border-bottom: 0; background: #fffcf8; }
  .page {
    height: 259px;
    border: 1px solid #b9b5b0;
    padding: 0 4px 0 9px;
    background: linear-gradient(#fffaf4, #fff6ea 40%, #fff1de 72%, #fff6ea 88%, #fefefe);
  }
  .aci { line-height: 16px; height: 17px; letter-spacing: -.42px; white-space: nowrap; }
  .palette {
    width: 310px;
    height: 56px;
    display: grid;
    grid-template: repeat(5, 1fr) / repeat(24, 1fr);
    gap: 1px;
    background: #b7b0a4;
    margin-bottom: 8px;
  }
  .picks { display: flex; align-items: center; height: 24px; margin-top: 23px; }
  .basic { display: flex; width: 167px; padding-left: 1px; height: 18px; }
  .basic i { width: 16.800px; height: 18px; border: 1px solid #e6dfd3; flex: none; }
  .basic .picked { height: 23px; width: 21px; margin: -3px -2px 0; border: 2px solid #1b4a18; outline: 1px solid #222; outline-offset: -1px; z-index: 1; }
  .grays { margin-top: 3px; }
  .dis {
    width: 68px;
    height: 18px;
    margin-right: 5px;
    border: 1px solid #c9c2b8;
    background: #fbf1e5;
    color: #9a948c;
    line-height: 17px;
    text-align: center;
  }
  .entry { position: relative; display: flex; justify-content: space-between; height: 66px; margin-top: -15px; z-index: 1; }
  .field { padding-top: 26px; z-index: 1; }
  .field span { display: block; line-height: 15px; height: 14px; }
  .input { width: 178px; height: 18px; border: 1px solid #e2dcd3; border-top-color: #beb8ae; padding-left: 2px; line-height: 16px; letter-spacing: -.35px; }
  .preview { display: grid; width: 61px; height: 60px; margin: 0 18px 0 0; z-index: 1; }
  .preview i { grid-area: 1 / 1; }
  .old { width: 31px; height: 32px; justify-self: end; background: #fcee0e; border: 1px solid #b9b24b; }
  .now { width: 49px; height: 48px; align-self: end; background: #00f908; border: 1px solid #84c070; }
  .wm { position: absolute; left: 0; top: 12px; }
  .wm text { font: 700 50px 'Open Sans', sans-serif; fill: #fff; opacity: .6; }
  .d-btns { display: flex; justify-content: flex-end; gap: 4px; padding-top: 10px; margin-right: 3px; }
  .d-btns span {
    width: 69px;
    height: 20px;
    border: 1px solid #8c8e8c;
    border-radius: 3px;
    background: linear-gradient(#f5f5f5, #ececec 50%, #d8d9d8);
    text-align: center;
    line-height: 18px;
    font-size: 11px;
  }
  .d-btns .ok { border-color: #2f6a8c; background: linear-gradient(#dff1fb, #b9e0f5 50%, #8cc8e8); }
  .cursor { position: absolute; left: 626px; top: 502px; }
  .cursor path { fill: #fff; stroke: #555; }
</style>
